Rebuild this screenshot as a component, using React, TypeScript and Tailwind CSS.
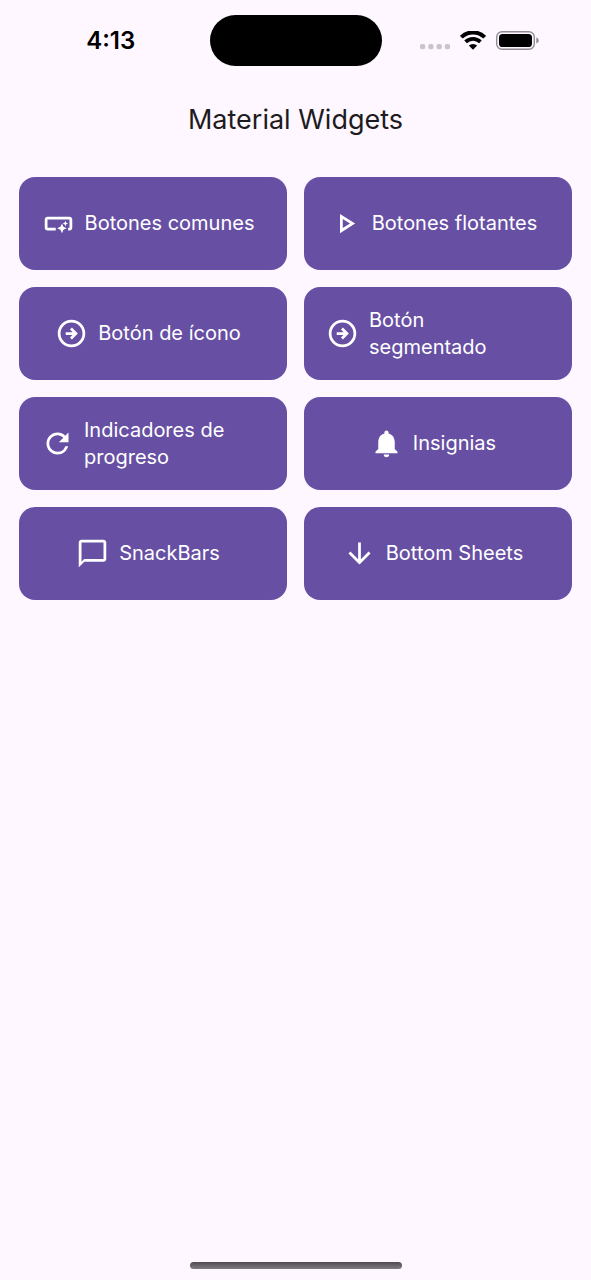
import React from "react";
import type { IconType } from "react-icons";
import {
  MdArrowDownward,
  MdChatBubbleOutline,
  MdNotifications,
  MdOutlinePlayArrow,
  MdOutlineSmartButton,
  MdRefresh,
} from "react-icons/md";

interface MenuItem {
  label: string;
  Icon: IconType | React.FC<{ className?: string }>;
}

const ArrowCircle = ({ className }: { className?: string }) => (
  <svg
    viewBox="0 0 24 24"
    fill="none"
    stroke="currentColor"
    strokeWidth="2"
    className={className}
  >
    <circle cx="12" cy="12" r="9" />
    <path d="M7.8 12h7M11.6 8.4 15.2 12l-3.6 3.6" />
  </svg>
);

const MENU_ITEMS: MenuItem[] = [
  { label: "Botones comunes", Icon: MdOutlineSmartButton },
  { label: "Botones flotantes", Icon: MdOutlinePlayArrow },
  { label: "Botón de ícono", Icon: ArrowCircle },
  { label: "Botón segmentado", Icon: ArrowCircle },
  { label: "Indicadores de progreso", Icon: MdRefresh },
  { label: "Insignias", Icon: MdNotifications },
  { label: "SnackBars", Icon: MdChatBubbleOutline },
  { label: "Bottom Sheets", Icon: MdArrowDownward },
];

const StatusBar = () => (
  <div className="grid grid-cols-[1fr_172px_1fr] items-center pt-[15px] text-black">
    <span className="pl-3 text-center text-2xl leading-6 font-semibold">4:13</span>
    <div className="h-[51px] rounded-full bg-black" />
    <div className="flex items-center justify-end gap-[10px] pr-[52px]">
      <svg viewBox="0 0 30 19" className="h-[19px] w-[30px] text-[#c9c4cc]" fill="currentColor">
        <rect x="0" y="13" width="5.2" height="5.2" rx="1.8" />
        <rect x="8.3" y="13" width="5.2" height="5.2" rx="1.8" />
        <rect x="16.6" y="13" width="5.2" height="5.2" rx="1.8" />
        <rect x="24.8" y="13" width="5.2" height="5.2" rx="1.8" />
      </svg>
      <svg viewBox="0 0 26 19" className="h-[19px] w-[26px]" fill="none" stroke="currentColor">
        <path d="M1.3 6.2a16.6 16.6 0 0 1 23.4 0" strokeWidth="4" />
        <path d="M5.6 10.9a10.5 10.5 0 0 1 14.8 0" strokeWidth="3.8" />
        <path d="M13 18.8l-4.2-4.2a6 6 0 0 1 8.4 0z" fill="currentColor" stroke="none" />
      </svg>
      <svg viewBox="0 0 43 19" className="h-[19px] w-[43px]" fill="none">
        <rect x="0.7" y="0.7" width="37.6" height="17.6" rx="5.4" stroke="#918c94" strokeWidth="1.4" />
        <rect x="3" y="3" width="33" height="13" rx="3.6" fill="currentColor" />
        <path d="M40.3 6.6c1.6.5 2.4 1.6 2.4 2.9s-.8 2.4-2.4 2.9z" fill="#918c94" />
      </svg>
    </div>
  </div>
);

const App = () => {
  return (
    <div className="flex min-h-screen flex-col bg-[#fef7ff] font-['Inter',sans-serif]">
      <StatusBar />
      <header className="mt-[15px] flex h-[78px] items-center justify-center">
        <h1 className="text-[27px] leading-9 text-[#1d1b20]">Material Widgets</h1>
      </header>
      <main className="flex-1 px-[19px] pt-[18px]">
        <div className="grid grid-cols-2 gap-[17px]">
          {MENU_ITEMS.map(({ label, Icon }) => (
            <button
              key={label}
              type="button"
              className="flex min-h-[93px] items-center justify-center gap-[10px] rounded-2xl bg-[#6750a4] pr-[32px] pl-[22px] text-left text-[20px] leading-[27px] text-white"
            >
              <Icon className="size-[33px] shrink-0" />
              <span>{label}</span>
            </button>
          ))}
        </div>
      </main>
      <div className="mx-auto mb-[11px] h-[7px] w-[212px] rounded-full bg-linear-to-b from-[#4f4b51] to-[#817c83]" />
    </div>
  );
};

export default App;
